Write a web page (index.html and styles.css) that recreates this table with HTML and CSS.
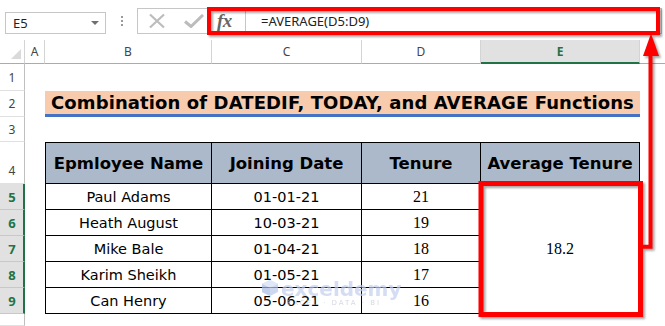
FILE: index.html
```html
<!DOCTYPE html>
<html>
<head>
<meta charset="utf-8">
<link rel="stylesheet" href="styles.css">
</head>
<body>
<div class="app">
  <div class="toolbar">
    <div class="namebox"><span>E5</span><span class="caret"></span></div>
    <div class="grip"><span></span><span></span><span></span></div>
    <div class="fbar">
      <div class="fbtns">
        <svg class="ico" width="18" height="16" viewBox="0 0 18 16"><path d="M2 1.5 L16 14.5 M16 1.5 L2 14.5" stroke="#bcbcbc" stroke-width="2.2" fill="none"/></svg>
        <svg class="ico chk" width="20" height="14" viewBox="0 0 20 14"><path d="M1 7.5 L7 12.5 L19 1" stroke="#bcbcbc" stroke-width="3" fill="none"/></svg>
        <span class="fx">fx</span>
      </div>
      <div class="finput">=AVERAGE(D5:D9)</div>
    </div>
  </div>

  <div class="sheet">
    <!-- column headers -->
    <div class="corner"><span class="tri"></span></div>
    <div class="ch">A</div>
    <div class="ch">B</div>
    <div class="ch">C</div>
    <div class="ch">D</div>
    <div class="ch sel">E</div>
    <div class="ch last"></div>

    <!-- row 1 -->
    <div class="rh">1</div>
    <div class="c"></div><div class="c"></div><div class="c"></div><div class="c"></div><div class="c"></div><div class="c"></div>

    <!-- row 2 -->
    <div class="rh">2</div>
    <div class="c"></div>
    <div class="title">Combination of DATEDIF, TODAY, and AVERAGE Functions</div>
    <div class="c"></div>

    <!-- row 3 -->
    <div class="rh">3</div>
    <div class="c"></div><div class="c"></div><div class="c"></div><div class="c"></div><div class="c"></div><div class="c"></div>

    <!-- row 4 -->
    <div class="rh bottom">4</div>
    <div class="c"></div>
    <div class="th first">Epmloyee Name</div>
    <div class="th">Joining Date</div>
    <div class="th">Tenure</div>
    <div class="th">Average Tenure</div>
    <div class="c"></div>

    <!-- row 5 -->
    <div class="rh hs">5</div>
    <div class="c"></div>
    <div class="td first">Paul Adams</div>
    <div class="td">01-01-21</div>
    <div class="td num">21</div>
    <div class="td num avg">18.2</div>
    <div class="c"></div>

    <!-- row 6 -->
    <div class="rh hs">6</div>
    <div class="c"></div>
    <div class="td first">Heath August</div>
    <div class="td">10-03-21</div>
    <div class="td num">19</div>
    <div class="c"></div>

    <!-- row 7 -->
    <div class="rh hs">7</div>
    <div class="c"></div>
    <div class="td first">Mike Bale</div>
    <div class="td">01-04-21</div>
    <div class="td num">18</div>
    <div class="c"></div>

    <!-- row 8 -->
    <div class="rh hs">8</div>
    <div class="c"></div>
    <div class="td first">Karim Sheikh</div>
    <div class="td">01-05-21</div>
    <div class="td num">17</div>
    <div class="c"></div>

    <!-- row 9 -->
    <div class="rh hs">9</div>
    <div class="c"></div>
    <div class="td first">Can Henry</div>
    <div class="td">05-06-21</div>
    <div class="td num">16</div>
    <div class="c"></div>

    <!-- row 10 (partial) -->
    <div class="rh"></div>
  </div>

  <div class="watermark">
    <svg width="18" height="18" viewBox="0 0 18 18"><path d="M9 1 L17 5 L17 13 L9 17 L1 13 L1 5 Z" fill="#b9c8ea"/><path d="M9 1 L17 5 L9 9 L1 5 Z" fill="#d3ddf3"/><path d="M9 9 L9 17 L1 13 L1 5 Z" fill="#a9bbe5"/></svg>
    <div class="wm-text">
      <span class="wm-name">exceldemy</span>
      <span class="wm-sub">EXCEL · DATA · BI</span>
    </div>
  </div>

  <svg class="annot" width="665" height="326" viewBox="0 0 665 326">
    <rect x="209" y="9" width="449" height="24" fill="none" stroke="#ff0000" stroke-width="4"/>
    <rect x="481" y="183.5" width="159.5" height="131" fill="none" stroke="#ff0000" stroke-width="5"/>
    <path d="M641 246.7 H650.5 V54" fill="none" stroke="#ff0000" stroke-width="4"/>
    <polygon points="643,56 659,56 651,33.5" fill="#ff0000"/>
  </svg>
</div>
</body>
</html>
```
FILE: styles.css
```css
* {
  box-sizing: border-box;
  margin: 0;
  padding: 0;
}

body {
  margin: 0;
  width: 665px;
  height: 326px;
  overflow: hidden;
  background: #ffffff;
  font-family: "Noto Sans", "Open Sans", sans-serif;
}

.app {
  position: relative;
  width: 665px;
  height: 326px;
  display: flex;
  flex-direction: column;
}

/* ---------- toolbar ---------- */
.toolbar {
  height: 40px;
  flex: none;
  display: flex;
  align-items: flex-start;
  padding-top: 8px;
}

.namebox {
  margin-left: 5px;
  margin-top: 4px;
  width: 101px;
  height: 22px;
  border: 1px solid #c6c6c6;
  display: flex;
  align-items: center;
  justify-content: space-between;
  padding: 0 6px 0 7px;
  font-size: 13px;
  color: #222;
}

.caret {
  width: 0;
  height: 0;
  border-left: 4px solid transparent;
  border-right: 4px solid transparent;
  border-top: 4px solid #707070;
}

.grip {
  width: 31px;
  height: 26px;
  display: flex;
  flex-direction: column;
  align-items: center;
  justify-content: center;
  gap: 2px;
}

.grip span {
  width: 2px;
  height: 2px;
  background: #9a9a9a;
}

.fbar {
  width: 525px;
  height: 26px;
  border: 1px solid #c6c6c6;
  display: flex;
}

.fbtns {
  width: 108px;
  height: 100%;
  border-right: 1px solid #c6c6c6;
  display: flex;
  align-items: center;
  padding-left: 10px;
}

.ico {
  display: block;
}

.chk {
  margin-left: 18px;
}

.fx {
  margin-left: 13px;
  font-family: "Liberation Serif", "DejaVu Serif", serif;
  font-style: italic;
  font-weight: 700;
  font-size: 19px;
  color: #666;
  letter-spacing: -0.5px;
}

.finput {
  flex: 1;
  padding-left: 15px;
  font-size: 13px;
  line-height: 24px;
  color: #222;
}

/* ---------- sheet ---------- */
.sheet {
  flex: 1;
  display: grid;
  grid-template-columns: 25px 20px 167px 150px 119px 159px 1fr;
  grid-template-rows: 24px 27px 26px 25px 42px 26px 26px 26px 26px 26px 1fr;
}

.corner {
  border-right: 1px solid #d4d4d4;
  border-bottom: 1px solid #ababab;
  position: relative;
}

.tri {
  position: absolute;
  right: 3px;
  bottom: 4px;
  width: 0;
  height: 0;
  border-left: 10px solid transparent;
  border-bottom: 10px solid #dadada;
}

.ch {
  border-right: 1px solid #d4d4d4;
  border-bottom: 1px solid #ababab;
  display: flex;
  align-items: center;
  justify-content: center;
  font-size: 12px;
  color: #444;
}

.ch.sel {
  background: #e1e1e1;
  border-bottom: 2px solid #217346;
  color: #217346;
  font-weight: 700;
}

.ch.last {
  border-right: none;
}

.rh {
  grid-column: 1;
  border-right: 1px solid #bfbfbf;
  border-bottom: 1px solid #e1e1e1;
  display: flex;
  align-items: center;
  justify-content: center;
  font-size: 12px;
  color: #444;
}

.rh.bottom {
  align-items: flex-end;
  padding-bottom: 4px;
}

.rh.hs {
  background: #e1e1e1;
  border-right: 2px solid #217346;
  border-bottom: 1px solid #c8c8c8;
  color: #217346;
  font-weight: 700;
  font-size: 13px;
  padding-left: 1px;
}

.c {
  background: #fff;
}

.title {
  grid-column: span 4;
  background: #f8cbad;
  border-bottom: 3px solid #4472c4;
  display: flex;
  align-items: center;
  justify-content: center;
  font-family: "DejaVu Sans", sans-serif;
  font-weight: 700;
  font-size: 18px;
  color: #000;
  white-space: nowrap;
  letter-spacing: 0.1px;
}

.th {
  background: #acb9ca;
  border-top: 1px solid #000;
  border-right: 1px solid #000;
  border-bottom: 1px solid #000;
  display: flex;
  align-items: center;
  justify-content: center;
  font-family: "DejaVu Sans", sans-serif;
  font-weight: 700;
  font-size: 16.5px;
  color: #000;
  white-space: nowrap;
}

.th.first,
.td.first {
  border-left: 1px solid #000;
}

.td {
  border-right: 1px solid #000;
  border-bottom: 1px solid #000;
  display: flex;
  align-items: center;
  justify-content: center;
  font-family: "DejaVu Sans", sans-serif;
  font-size: 14.5px;
  color: #000;
  white-space: nowrap;
}

.td.num {
  font-family: "Liberation Serif", "DejaVu Serif", serif;
  font-size: 16px;
}

.td.avg {
  grid-row: span 5;
}

/* ---------- overlays ---------- */
.watermark {
  position: absolute;
  left: 261px;
  top: 279px;
  display: flex;
  align-items: flex-start;
  gap: 2px;
  opacity: 0.7;
  pointer-events: none;
}

.wm-text {
  display: flex;
  flex-direction: column;
}

.wm-name {
  font-family: "DejaVu Sans", sans-serif;
  font-weight: 700;
  font-size: 20px;
  line-height: 20px;
  color: #c3cfee;
  letter-spacing: 0px;
}

.wm-sub {
  font-family: "DejaVu Sans", sans-serif;
  font-size: 7px;
  line-height: 9px;
  color: #c3c9d6;
  letter-spacing: 2px;
  margin-left: 6px;
}

.annot {
  position: absolute;
  left: 0;
  top: 0;
  pointer-events: none;
  filter: drop-shadow(2px 2px 1.2px rgba(0, 0, 0, 0.35));
}
```
